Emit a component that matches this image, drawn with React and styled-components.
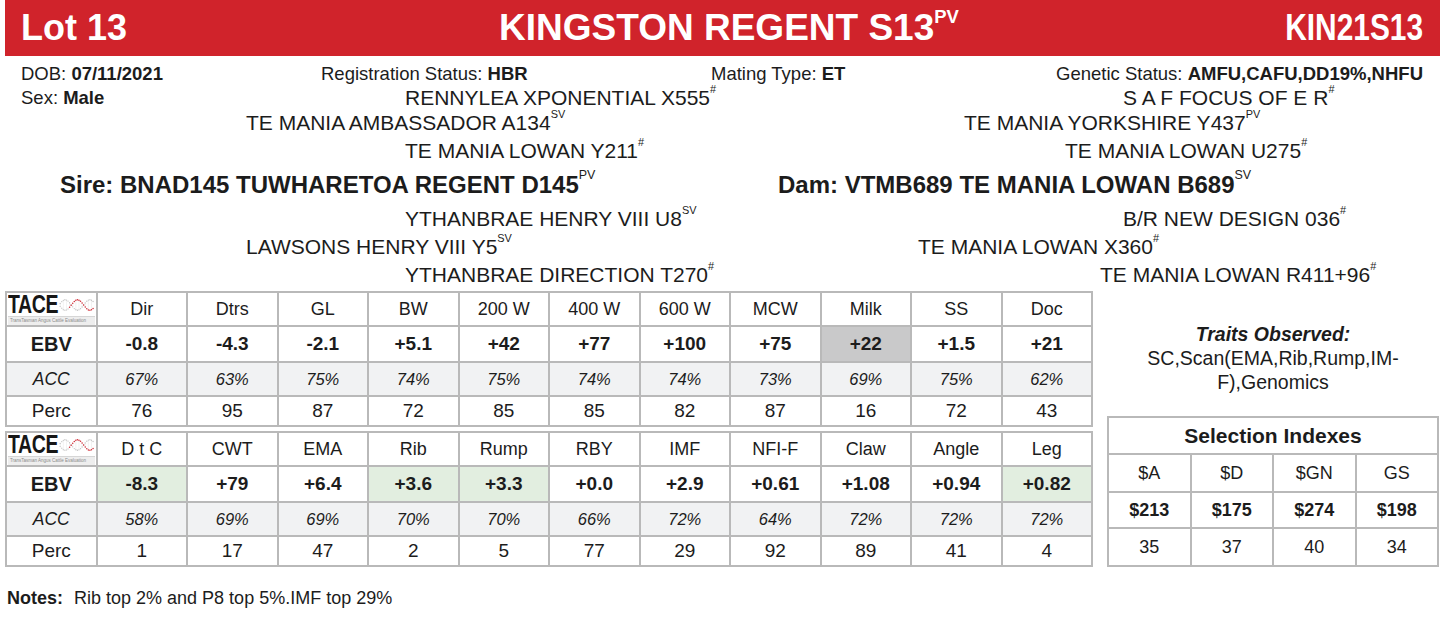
import React from 'react';
import styled, { createGlobalStyle } from 'styled-components';

const GlobalStyle = createGlobalStyle`
  body {
    margin: 0;
    background: #fff;
    color: #1c1c1c;
    font-family: 'Liberation Sans', Arial, sans-serif;
  }
`;

const tables = [
  {
    traits: ['Dir', 'Dtrs', 'GL', 'BW', '200 W', '400 W', '600 W', 'MCW', 'Milk', 'SS', 'Doc'],
    ebv: ['-0.8', '-4.3', '-2.1', '+5.1', '+42', '+77', '+100', '+75', '+22', '+1.5', '+21'],
    acc: [67, 63, 75, 74, 75, 74, 74, 73, 69, 75, 62],
    perc: [76, 95, 87, 72, 85, 85, 82, 87, 16, 72, 43],
    marks: { 8: 'grey' },
  },
  {
    traits: ['D t C', 'CWT', 'EMA', 'Rib', 'Rump', 'RBY', 'IMF', 'NFI-F', 'Claw', 'Angle', 'Leg'],
    ebv: ['-8.3', '+79', '+6.4', '+3.6', '+3.3', '+0.0', '+2.9', '+0.61', '+1.08', '+0.94', '+0.82'],
    acc: [58, 69, 69, 70, 70, 66, 72, 64, 72, 72, 72],
    perc: [1, 17, 47, 2, 5, 77, 29, 92, 89, 41, 4],
    marks: { 0: 'green', 3: 'green', 4: 'green', 10: 'green' },
  },
];

const indexes = [
  { name: '$A', value: '$213', perc: 35 },
  { name: '$D', value: '$175', perc: 37 },
  { name: '$GN', value: '$274', perc: 40 },
  { name: 'GS', value: '$198', perc: 34 },
];

const TaceLogo = () => {
  const dots = [];
  for (let i = 0; i < 22; i++) {
    const x = 1.5 + i * 1.95;
    const s = Math.sin(i * 0.4 + 0.3);
    if (i % 2 === 0) {
      dots.push(<line key={'l' + i} x1={x} x2={x} y1={9 + 6.5 * s} y2={9 - 6.5 * s} stroke="#e4e4e4" strokeWidth="0.6" />);
    }
    dots.push(<circle key={'b' + i} cx={x} cy={9 - 6.5 * s} r="0.85" fill="#c2c2c2" />);
    dots.push(<circle key={'a' + i} cx={x} cy={9 + 6.5 * s} r="0.95" fill={i > 5 ? '#d2303a' : '#cfcfcf'} />);
  }
  return (
    <Logo>
      <LogoTop>
        <LogoWord>TACE</LogoWord>
        <svg width="44" height="18" viewBox="0 0 44 18">{dots}</svg>
      </LogoTop>
      <LogoStrip>TransTasman Angus Cattle Evaluation</LogoStrip>
    </Logo>
  );
};

const EbvBlock = ({ data }) => (
  <EbvTable>
    <tbody>
      <Row h={34}>
        <LogoCell><TaceLogo /></LogoCell>
        {data.traits.map(t => <HeadCell key={t}>{t}</HeadCell>)}
      </Row>
      <Row h={36}>
        <RowLabel bold>EBV</RowLabel>
        {data.ebv.map((v, i) => <EbvCell key={i} mark={data.marks[i]}>{v}</EbvCell>)}
      </Row>
      <Row h={34} shade>
        <RowLabel italic>ACC</RowLabel>
        {data.acc.map((v, i) => <AccCell key={i}>{v}%</AccCell>)}
      </Row>
      <Row h={30}>
        <RowLabel>Perc</RowLabel>
        {data.perc.map((v, i) => <PercCell key={i}>{v}</PercCell>)}
      </Row>
    </tbody>
  </EbvTable>
);

export default function App() {
  return (
    <>
      <GlobalStyle />
      <Page>
        <Header>
          <LotNo>Lot 13</LotNo>
          <Title>KINGSTON REGENT S13<TitleSup>PV</TitleSup></Title>
          <Tag><span>KIN21S13</span></Tag>
        </Header>

        <InfoRow>
          <span>DOB: <b>07/11/2021</b></span>
          <span>Registration Status: <b>HBR</b></span>
          <span>Mating Type: <b>ET</b></span>
          <Genetic>Genetic Status: <b>AMFU,CAFU,DD19%,NHFU</b></Genetic>
        </InfoRow>

        <PedRow h={25}>
          <Cell indent={21}>
            <Sex>Sex: <b>Male</b></Sex>
            <Name>RENNYLEA XPONENTIAL X555<Sup>#</Sup></Name>
          </Cell>
          <Cell indent={403}><Name>S A F FOCUS OF E R<Sup>#</Sup></Name></Cell>
        </PedRow>
        <PedRow h={26}>
          <Cell indent={246}><Name>TE MANIA AMBASSADOR A134<Sup>SV</Sup></Name></Cell>
          <Cell indent={244}><Name>TE MANIA YORKSHIRE Y437<Sup>PV</Sup></Name></Cell>
        </PedRow>
        <PedRow h={30}>
          <Cell indent={405}><Name>TE MANIA LOWAN Y211<Sup>#</Sup></Name></Cell>
          <Cell indent={345}><Name>TE MANIA LOWAN U275<Sup>#</Sup></Name></Cell>
        </PedRow>
        <PedRow h={38}>
          <Cell indent={60}><Parent>Sire: BNAD145 TUWHARETOA REGENT D145<Sup>PV</Sup></Parent></Cell>
          <Cell indent={58}><Parent>Dam: VTMB689 TE MANIA LOWAN B689<Sup>SV</Sup></Parent></Cell>
        </PedRow>
        <PedRow h={30}>
          <Cell indent={405}><Name>YTHANBRAE HENRY VIII U8<Sup>SV</Sup></Name></Cell>
          <Cell indent={403}><Name>B/R NEW DESIGN 036<Sup>#</Sup></Name></Cell>
        </PedRow>
        <PedRow h={25}>
          <Cell indent={246}><Name>LAWSONS HENRY VIII Y5<Sup>SV</Sup></Name></Cell>
          <Cell indent={198}><Name>TE MANIA LOWAN X360<Sup>#</Sup></Name></Cell>
        </PedRow>
        <PedRow h={31}>
          <Cell indent={405}><Name>YTHANBRAE DIRECTION T270<Sup>#</Sup></Name></Cell>
          <Cell indent={380}><Name>TE MANIA LOWAN R411+96<Sup>#</Sup></Name></Cell>
        </PedRow>

        <Lower>
          <EbvStack>
            {tables.map((t, i) => <EbvBlock key={i} data={t} />)}
          </EbvStack>
          <Side>
            <Traits>
              <TraitsTitle>Traits Observed:</TraitsTitle>
              <div>SC,Scan(EMA,Rib,Rump,IM-</div>
              <div>F),Genomics</div>
            </Traits>
            <IndexTable>
              <tbody>
                <Row h={37}>
                  <IndexTitle colSpan={4}>Selection Indexes</IndexTitle>
                </Row>
                <Row h={38}>
                  {indexes.map(x => <IndexCell key={x.name}>{x.name}</IndexCell>)}
                </Row>
                <Row h={36}>
                  {indexes.map(x => <IndexCell key={x.name} bold>{x.value}</IndexCell>)}
                </Row>
                <Row h={38}>
                  {indexes.map(x => <IndexCell key={x.name}>{x.perc}</IndexCell>)}
                </Row>
              </tbody>
            </IndexTable>
          </Side>
        </Lower>

        <Notes>
          <b>Notes:</b>
          <span>Rib top 2% and P8 top 5%.IMF top 29%</span>
        </Notes>
      </Page>
    </>
  );
}

const Page = styled.div`
  width: 1449px;
  height: 625px;
  overflow: hidden;
`;

const Header = styled.header`
  margin-left: 5px;
  width: 1435px;
  height: 56px;
  box-sizing: border-box;
  padding: 0 17px 0 16px;
  background: #d0232b;
  color: #fff;
  display: grid;
  grid-template-columns: 1fr auto 1fr;
  align-items: center;
`;

const LotNo = styled.div`
  font-size: 36px;
  font-weight: 700;
`;

const Title = styled.h1`
  margin: 0;
  padding-left: 14px;
  font-size: 37px;
  font-weight: 700;
  white-space: nowrap;
`;

const TitleSup = styled.sup`
  font-size: 0.5em;
  vertical-align: top;
  position: relative;
  top: 1px;
  line-height: 1;
`;

const Tag = styled.div`
  justify-self: end;
  font-size: 36px;
  font-weight: 700;
  & span {
    display: inline-block;
    transform: scaleX(0.83);
    transform-origin: right center;
  }
`;

const InfoRow = styled.div`
  margin-top: 6px;
  height: 23px;
  padding: 0 26px 0 21px;
  display: grid;
  grid-template-columns: 300px 390px 1fr auto;
  align-items: center;
  font-size: 18.5px;
  white-space: nowrap;
`;

const Genetic = styled.span`
  justify-self: end;
`;

const PedRow = styled.div`
  height: ${({ h }) => h}px;
  display: grid;
  grid-template-columns: 720px 1fr;
  align-items: center;
`;

const Cell = styled.div`
  padding-left: ${({ indent }) => indent}px;
  display: flex;
  align-items: center;
  white-space: nowrap;
`;

const Sex = styled.span`
  width: 384px;
  font-size: 18.5px;
`;

const Name = styled.span`
  font-size: 21px;
`;

const Parent = styled.span`
  font-size: 24px;
  font-weight: 700;
`;

const Sup = styled.sup`
  font-size: 0.52em;
  vertical-align: top;
  position: relative;
  top: -2px;
  line-height: 1;
  font-weight: 400;
`;

const Lower = styled.div`
  margin-top: 1px;
  padding-left: 5px;
  display: flex;
  gap: 14px;
`;

const EbvStack = styled.div`
  display: flex;
  flex-direction: column;
  gap: 4px;
  width: 1088px;
`;

const EbvTable = styled.table`
  width: 1088px;
  table-layout: fixed;
  border-collapse: collapse;
  border: 2px solid #b4b4b4;
`;

const Row = styled.tr`
  height: ${({ h }) => h}px;
  background: ${({ shade }) => (shade ? '#f1f2f3' : 'transparent')};
`;

const BaseCell = styled.td`
  border: 2px solid #b9b9b9;
  padding: 0;
  text-align: center;
  vertical-align: middle;
  white-space: nowrap;
`;

const HeadCell = styled(BaseCell)`
  font-size: 18px;
`;

const RowLabel = styled(BaseCell)`
  font-size: ${({ bold }) => (bold ? 20 : 19)}px;
  font-weight: ${({ bold }) => (bold ? 700 : 400)};
  font-style: ${({ italic }) => (italic ? 'italic' : 'normal')};
  ${({ italic }) => italic && 'font-size: 17.5px;'}
`;

const EbvCell = styled(BaseCell)`
  font-size: 19px;
  font-weight: 700;
  background: ${({ mark }) => (mark === 'grey' ? '#c9c9ca' : mark === 'green' ? '#e2eee0' : 'transparent')};
`;

const AccCell = styled(BaseCell)`
  font-size: 16.5px;
  font-style: italic;
`;

const PercCell = styled(BaseCell)`
  font-size: 19px;
`;

const LogoCell = styled(BaseCell)`
  padding: 1px;
`;

const Logo = styled.div`
  display: flex;
  flex-direction: column;
  align-items: stretch;
  height: 30px;
`;

const LogoTop = styled.div`
  display: flex;
  align-items: center;
  height: 21px;
`;

const LogoWord = styled.span`
  display: inline-block;
  margin-right: -13px;
  font-size: 25px;
  line-height: 21px;
  font-weight: 700;
  letter-spacing: -0.5px;
  transform: scaleX(0.78);
  transform-origin: left center;
  color: #161616;
  white-space: nowrap;
`;

const LogoStrip = styled.div`
  margin-top: 1px;
  height: 8px;
  background: #eeeeee;
  border-top: 1px solid #d6d6d6;
  color: #8a8a8a;
  font-size: 4.5px;
  line-height: 8px;
  text-align: left;
  padding-left: 2px;
  white-space: nowrap;
`;

const Side = styled.div`
  width: 332px;
  display: flex;
  flex-direction: column;
  align-items: stretch;
`;

const Traits = styled.div`
  margin-top: 31px;
  text-align: center;
  font-size: 19.5px;
  line-height: 24px;
`;

const TraitsTitle = styled.div`
  font-weight: 700;
  font-style: italic;
`;

const IndexTable = styled.table`
  margin-top: 22px;
  width: 332px;
  table-layout: fixed;
  border-collapse: collapse;
  border: 2px solid #b4b4b4;
`;

const IndexTitle = styled(BaseCell)`
  font-size: 21px;
  font-weight: 700;
`;

const IndexCell = styled(BaseCell)`
  font-size: 18px;
  font-weight: ${({ bold }) => (bold ? 700 : 400)};
`;

const Notes = styled.div`
  margin-top: 20px;
  padding-left: 7px;
  height: 22px;
  display: flex;
  align-items: center;
  gap: 11px;
  font-size: 18px;
`;
